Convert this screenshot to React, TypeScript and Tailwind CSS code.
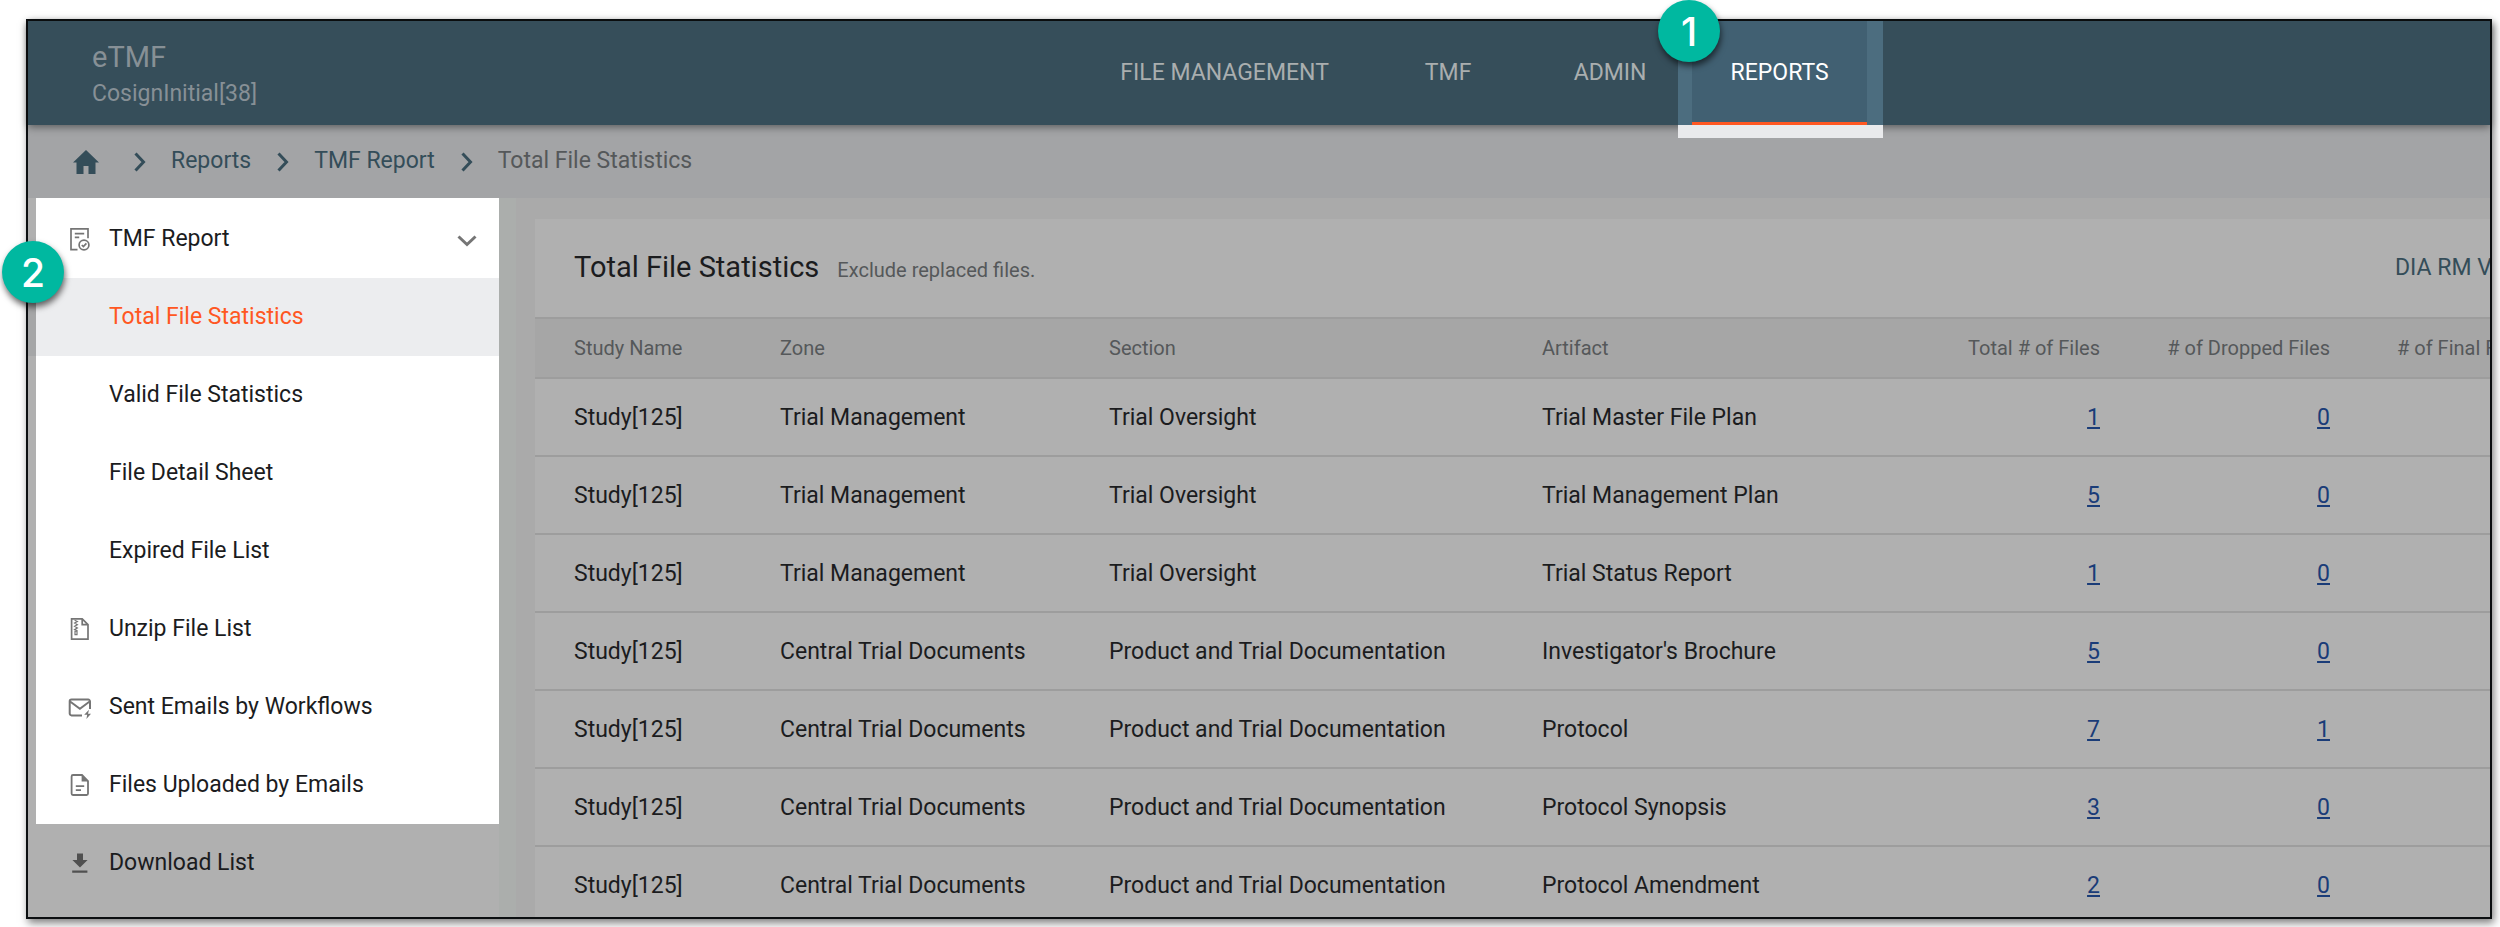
import type { ReactNode } from "react";

const tabs = [
  { label: "FILE MANAGEMENT", width: "w-[271px]", active: false },
  { label: "TMF", width: "w-[160px]", active: false },
  { label: "ADMIN", width: "w-[148px]", active: false },
  { label: "REPORTS", width: "w-[175px]", active: true },
];

const reportLinks = ["Total File Statistics", "Valid File Statistics", "File Detail Sheet", "Expired File List"];

const rows = [
  ["Trial Management", "Trial Oversight", "Trial Master File Plan", 1, 0],
  ["Trial Management", "Trial Oversight", "Trial Management Plan", 5, 0],
  ["Trial Management", "Trial Oversight", "Trial Status Report", 1, 0],
  ["Central Trial Documents", "Product and Trial Documentation", "Investigator's Brochure", 5, 0],
  ["Central Trial Documents", "Product and Trial Documentation", "Protocol", 7, 1],
  ["Central Trial Documents", "Product and Trial Documentation", "Protocol Synopsis", 3, 0],
  ["Central Trial Documents", "Product and Trial Documentation", "Protocol Amendment", 2, 0],
];

function ReportIcon() {
  return (
    <svg aria-hidden="true" viewBox="0 0 24 24" className="size-6" fill="none" stroke="currentColor" strokeWidth="1.7">
      <path d="M9.5 22.6H3V1.8h17v9.4M6.8 6.6h9.4M6.8 10.4h4.4" />
      <circle cx="16" cy="18" r="4.9" />
      <path d="m13.8 18 1.6 1.6 3-3.2" />
    </svg>
  );
}

function ZipIcon() {
  return (
    <svg aria-hidden="true" viewBox="0 0 24 24" className="size-6" fill="none" stroke="currentColor" strokeWidth="1.7">
      <path d="M3.6 1.8h10.6l5.800 5.800v14.600H3.600zM14.200 1.800v5.800H20" />
      <path d="m6.600 3.200 2.800 1.300-2.800 1.600 2.800 1.600-2.800 1.600 2.800 1.600-2.800 1.600 2.800 1.300" strokeWidth="1.2" />
      <path d="M7 14.200h2v3.400H7z" strokeWidth="1.200" />
    </svg>
  );
}

function MailIcon() {
  return (
    <svg aria-hidden="true" viewBox="0 0 24 24" className="size-6" fill="none" stroke="currentColor" strokeWidth="2">
      <path d="M14 20.400H3.500A1.800 1.800 0 0 1 1.700 18.600V6.400A1.800 1.800 0 0 1 3.500 4.600h16.700A1.800 1.800 0 0 1 22 6.400v7.600M2.400 6.800l9.500 7 9.400-7" />
      <path d="M21 14.800 16.200 19.800h3L18.400 24l4.600-5.200h-3z" fill="currentColor" stroke="none" />
    </svg>
  );
}

function FileIcon() {
  return (
    <svg aria-hidden="true" viewBox="0 0 24 24" className="size-6" fill="none" stroke="currentColor" strokeWidth="1.8">
      <path d="M5 2h9l6 6.200v12.400a1.400 1.400 0 0 1-1.400 1.400H5a1.400 1.400 0 0 1-1.400-1.400V3.400A1.400 1.400 0 0 1 5 2z" />
      <path d="M13.600 2v6.600H20z" fill="currentColor" stroke="none" />
      <path d="M7.800 13.200h8.400M7.800 17.200H13" />
    </svg>
  );
}

function DownloadIcon() {
  return (
    <svg aria-hidden="true" viewBox="0 0 24 24" className="size-6" fill="currentColor">
      <path d="M9 2.500h6v6.500h4.600L12 16.600 4.400 9H9zM4.200 19.400h15.200v2.400H4.200z" />
    </svg>
  );
}

function Chevron({ className }: { className: string }) {
  return (
    <svg aria-hidden="true" viewBox="0 0 12 20" className={`h-5 w-3 ${className}`} fill="none" stroke="currentColor" strokeWidth="3">
      <path d="m1.500 1.500 8 8.500-8 8.500" />
    </svg>
  );
}

function Badge({ children, className }: { children: ReactNode; className: string }) {
  return (
    <span
      className={`absolute z-10 flex size-[62px] items-center justify-center rounded-full bg-[#00b8a0] font-[Inter,sans-serif] text-[39px] leading-none font-medium text-white shadow-[1px_4px_6px_rgba(0,0,0,0.6)] ${className}`}
    >
      {children}
    </span>
  );
}

function SideLink({ icon, children }: { icon: ReactNode; children: ReactNode }) {
  return (
    <a href="#" className="flex h-[78px] items-center gap-[17px] pl-8">
      <span className="text-[#757575]">{icon}</span>
      {children}
    </a>
  );
}

export default function App() {
  return (
    <div className="h-screen overflow-hidden bg-white pt-[19px] pr-2 pb-2 pl-[26px] font-[Roboto,sans-serif] text-[23px] text-[#1b1c1e]">
      <div className="relative h-full border-2 border-[#0c0f11] bg-[#aaaaaa] shadow-[2px_4px_8px_rgba(0,0,0,0.5)]">
        <div className="flex h-full flex-col">
          <header className="relative z-[1] flex h-[104px] shrink-0 bg-[#364e5a] shadow-[0_2px_8px_rgba(0,0,0,0.45)]">
            <div className="w-[43.1%] pt-[18px] pl-16 text-[#879096]">
              <div className="text-[29px] leading-9">eTMF</div>
              <div className="leading-[38px]">CosignInitial[38]</div>
            </div>
            <nav className="flex gap-2 text-[#aaaeaf]">
              {tabs.map((tab) => (
                <div key={tab.label} className={`relative flex ${tab.width}`}>
                  {tab.active && (
                    <div className="absolute top-0 -right-4 -left-[14px] h-[117px] bg-[#e9eaec]">
                      <div className="h-[104px] bg-[#4c6d7f]" />
                    </div>
                  )}
                  <a
                    href="#"
                    className={
                      tab.active
                        ? "relative flex flex-1 items-center justify-center border-b-3 border-[#ff5722] bg-[#416072] pt-1 text-white"
                        : "flex flex-1 items-center justify-center pt-px"
                    }
                  >
                    {tab.label}
                  </a>
                  {tab.active && <Badge className="-top-[21px] -left-[34px]">1</Badge>}
                </div>
              ))}
            </nav>
          </header>

          <nav aria-label="Breadcrumb" className="flex h-[73px] shrink-0 items-center bg-[#a3a4a6] pl-[45px] text-[#344d59]">
            <a href="#" aria-label="Home">
              <svg aria-hidden="true" viewBox="0 0 26 24" className="h-6 w-[26px]" fill="currentColor">
                <path d="M13 0 0 12.500h3.500V24h7v-8h5v8h7V12.500H26z" />
              </svg>
            </a>
            <Chevron className="ml-[35px]" />
            <a href="#" className="ml-[25px]">Reports</a>
            <Chevron className="ml-[26px]" />
            <a href="#" className="ml-[25px]">TMF Report</a>
            <Chevron className="ml-[26px]" />
            <span className="ml-[25px] text-[#55585a]">Total File Statistics</span>
          </nav>

          <div className="flex min-h-0 flex-1">
            <aside className="w-[471px] shrink-0 bg-[#b0b0b0]">
              <nav className="relative ml-2 bg-white pt-0.5">
                <Badge className="top-[43px] -left-[34px]">2</Badge>
                <button type="button" className="flex h-[78px] w-full items-center gap-[17px] pr-[26px] pl-8">
                  <span className="text-[#757575]"><ReportIcon /></span>
                  TMF Report
                  <Chevron className="mt-1 ml-auto rotate-90 text-[#757575]" />
                </button>
                {reportLinks.map((label, i) => (
                  <a
                    key={label}
                    href="#"
                    className={`flex h-[78px] items-center pl-[73px] ${i === 0 ? "-ml-2 border-l-8 border-[#a5a6a7] bg-[#ecedef] text-[#ff5722]" : ""}`}
                  >
                    {label}
                  </a>
                ))}
                <SideLink icon={<ZipIcon />}>Unzip File List</SideLink>
                <SideLink icon={<MailIcon />}>Sent Emails by Workflows</SideLink>
                <SideLink icon={<FileIcon />}>Files Uploaded by Emails</SideLink>
              </nav>
              <a href="#" className="ml-2 flex h-[78px] items-center gap-[17px] pl-8">
                <span className="text-[#505050]"><DownloadIcon /></span>
                Download List
              </a>
            </aside>
            <div className="w-[17px] shrink-0 bg-[#abaeac]" />

            <main className="min-w-0 flex-1 overflow-hidden pt-[21px] pl-[19px]">
              <section className="h-full bg-[#b0b0b0]">
                <div className="flex h-[98px] items-center overflow-hidden whitespace-nowrap pl-[39px]">
                  <div className="flex items-baseline gap-[18px]">
                    <h1 className="text-[29px]">Total File Statistics</h1>
                    <span className="text-[20px] text-[#55585a]">Exclude replaced files.</span>
                  </div>
                  <div className="ml-auto w-[95px] shrink-0 text-[#344d59]">
                    <a href="#">DIA RM V3</a>
                  </div>
                </div>
                <table className="w-[2120px] table-fixed border-collapse text-left whitespace-nowrap">
                  <colgroup>
                    <col className="w-[245px]" />
                    <col className="w-[329px]" />
                    <col className="w-[433px]" />
                    <col className="w-[381px]" />
                    <col className="w-[216px]" />
                    <col className="w-[230px]" />
                    <col />
                  </colgroup>
                  <thead>
                    <tr className="h-[60px] border-y-2 border-[#9d9d9d] bg-[#a6a6a6] text-[20px] text-[#55585a] *:font-normal">
                      <th className="pl-[39px]">Study Name</th>
                      <th>Zone</th>
                      <th>Section</th>
                      <th>Artifact</th>
                      <th className="pr-[39px] text-right">Total # of Files</th>
                      <th className="pr-[39px] text-right"># of Dropped Files</th>
                      <th className="pl-7"># of Final Files</th>
                    </tr>
                  </thead>
                  <tbody>
                    {rows.map(([zone, section, artifact, total, dropped]) => (
                      <tr key={artifact} className="h-[78px] border-b-2 border-[#9d9d9d] *:pt-0.5">
                        <td className="pl-[39px]">Study[125]</td>
                        <td>{zone}</td>
                        <td>{section}</td>
                        <td>{artifact}</td>
                        <td className="pr-[39px] text-right"><a href="#" className="text-[#1a3c78] underline">{total}</a></td>
                        <td className="pr-[39px] text-right"><a href="#" className="text-[#1a3c78] underline">{dropped}</a></td>
                        <td />
                      </tr>
                    ))}
                  </tbody>
                </table>
              </section>
            </main>
          </div>
        </div>
      </div>
    </div>
  );
}
